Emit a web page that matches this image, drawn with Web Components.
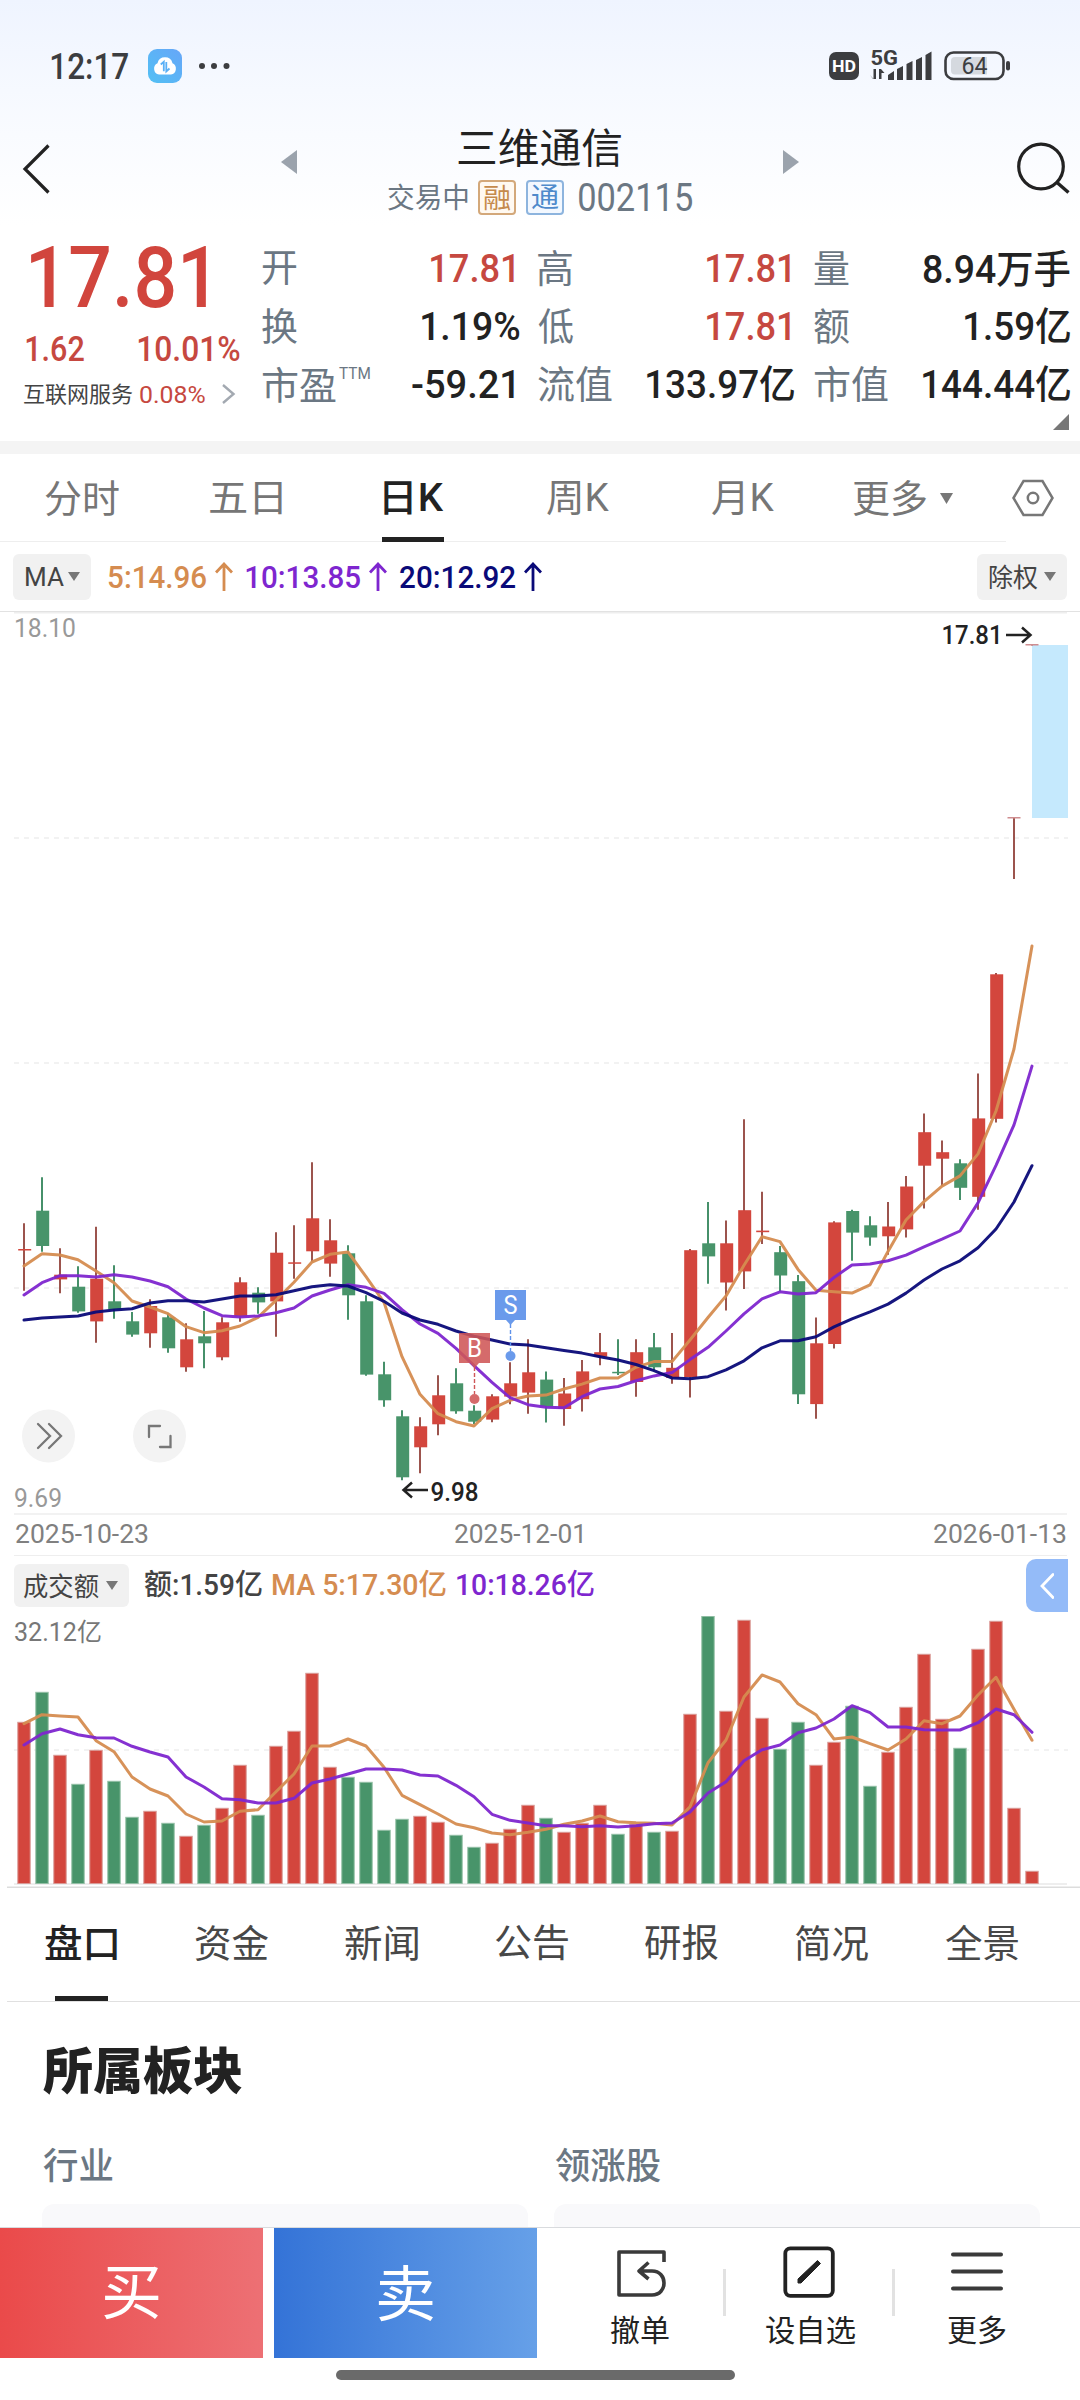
<!DOCTYPE html>
<html lang="zh-CN">
<head>
<meta charset="utf-8">
<title>三维通信 002115</title>
<style>
html,body{margin:0;padding:0}
body{width:1080px;height:2400px;overflow:hidden;background:#fff;font-family:Roboto,"Noto Sans CJK SC",sans-serif;color:#222}
</style>
</head>
<body>
<stock-app></stock-app>
<script>
const ctx = document.createElement('canvas').getContext('2d');

// <fit-text w="..">: a label whose box is exactly the ink of its text, condensed to the width w
class FitText extends HTMLElement {
  constructor() {
    super();
    this.attachShadow({ mode: 'open' }).innerHTML =
      '<style>:host{display:block;flex:none;white-space:nowrap}span{display:block;width:max-content;transform-origin:0 0}</style><span><slot></slot></span>';
  }
  connectedCallback() {
    const cs = getComputedStyle(this), size = parseFloat(cs.fontSize);
    ctx.font = `${cs.fontWeight} ${cs.fontSize} ${cs.fontFamily}`;
    const m = ctx.measureText(this.textContent);
    const ink = m.actualBoundingBoxRight + m.actualBoundingBoxLeft;
    const w = +this.getAttribute('w') || ink, k = w / ink;
    const base = (size - m.fontBoundingBoxAscent - m.fontBoundingBoxDescent) / 2 + m.fontBoundingBoxAscent;
    const h = m.actualBoundingBoxAscent + m.actualBoundingBoxDescent;
    this.style.width = w + 'px';
    this.style.height = h + 'px';
    this.style.lineHeight = size + 'px';
    this.shadowRoot.querySelector('span').style.transform =
      `translate(${m.actualBoundingBoxLeft * k}px,${m.actualBoundingBoxAscent - base}px) scaleX(${k})`;
  }
}
customElements.define('fit-text', FitText);

function define(name, css, html) {
  customElements.define(name, class extends HTMLElement {
    constructor() {
      super();
      const t = document.createElement('template');
      t.innerHTML = `<style>:host{display:block}*{box-sizing:border-box}svg{display:block;flex:none}.row{display:flex;align-items:center}${css}</style>${typeof html === 'function' ? html() : html}`;
      this.attachShadow({ mode: 'open' }).append(t.content.cloneNode(true));
    }
  });
}
const T = (text, w, ml = 0, style = '') => `<fit-text w="${w}" style="margin-left:${ml}px;${style}">${text}</fit-text>`;
const down = (w, h, ml, c = '#777') => `<svg style="margin-left:${ml}px" width="${w}" height="${h}" viewBox="0 0 12 9" preserveAspectRatio="none"><path d="M0 0h12L6 9z" fill="${c}"/></svg>`;

define('status-bar', ':host{height:132px;display:flex;align-items:center}.sp{flex:1}', `
${T('12:17', 77, 51, 'font-size:36px;font-weight:500;color:#3c3d40')}
<svg width="34" height="34" style="margin-left:20px" viewBox="0 0 34 34"><defs><linearGradient id="c" x1="0" y1="1" x2="1" y2="0"><stop offset="0" stop-color="#52c0f4"/><stop offset="1" stop-color="#66a6f8"/></linearGradient></defs><rect width="34" height="34" rx="9" fill="url(#c)"/><path d="M11 25.500a6 6 0 0 1-1.500-11.300 7.700 7.700 0 0 1 15 0 6 6 0 0 1-1.500 11.300z" fill="#fff"/><path d="M12.800 15.500l3-2.800v9.500M18.300 13v9.500l3.200-3" fill="none" stroke="#5ab0f6" stroke-width="1.800"/></svg>
<svg width="32" height="8" style="margin-left:17px"><g fill="#3c3d40"><circle cx="3" cy="4" r="3"/><circle cx="15" cy="4" r="3"/><circle cx="27.500" cy="4" r="3"/></g></svg>
<span class="sp"></span>
<svg width="192" height="40" viewBox="824 46 192 40" style="margin-right:64px">
<rect x="829" y="52" width="30" height="28" rx="7" fill="#3c3d40"/>
<text x="832" y="71.500" font-size="17" font-weight="700" fill="#fff" textLength="24" lengthAdjust="spacingAndGlyphs">HD</text>
<text x="870.500" y="64.500" font-size="21" font-weight="700" fill="#3c3d40" textLength="27.500" lengthAdjust="spacingAndGlyphs">5G</text>
<g fill="#3c3d40"><path d="M870 75l3.500 4V69h2.500v10h-3zM879 79V69h2l3.500 4h-3v6z"/>
<path d="M888 75l6-4v9h-6zM897 69l6-3v14h-6zM906.500 64l6-3v19h-6zM916 60l6-3v23h-6zM925.500 55l6-3.500V80h-6z"/></g>
<rect x="945.500" y="52.500" width="58" height="26.500" rx="8" fill="none" stroke="#3c3d40" stroke-width="2.600"/>
<path d="M955 57h32v17.500h-32a4 4 0 0 1-4-4v-9.500a4 4 0 0 1 4-4z" fill="#d5d9df"/>
<rect x="1006" y="61" width="4" height="9.500" rx="2" fill="#3c3d40"/>
<text x="961.500" y="74" font-size="23" font-weight="400" fill="#3c3d40" textLength="26" lengthAdjust="spacingAndGlyphs">64</text>
</svg>`);

define('title-bar', `:host{height:92px;display:flex;align-items:flex-start;margin-top:0}
.mid{width:305px;margin-left:91px;margin-top:-20px}
.a{height:70px;justify-content:center}.b{height:30px;color:#6b7783}
.badge{display:flex;width:38px;height:35px;align-items:center;justify-content:center;border:2px solid #d3a87a;border-radius:4px;margin-left:9px;flex:none}`, `
<svg width="64" height="80" viewBox="0 130 64 80" style="margin-top:-2px"><path d="M48.500 145.500L25 169l23.500 23.500" fill="none" stroke="#222" stroke-width="3.200"/></svg>
<svg width="16" height="24" viewBox="0 0 16 24" style="margin:18px 0 0 217px"><path d="M16 0v24L0 12z" fill="#9ba3ad"/></svg>
<div class="mid"><div class="row a">${T('三维通信', 163, -2, 'font-size:41px')}</div>
<div class="row b">${T('交易中', 80, 0, 'font-size:28px')}<span class="badge" style="color:#c58a4c;background:#fff9f1;margin-left:10px">${T('融', 27, 0, 'font-size:27px')}</span><span class="badge" style="color:#4f8acb;border-color:#8db4de;background:#f3f8ff;margin-left:10px">${T('通', 27, 0, 'font-size:27px')}</span>${T('002115', 113, 15, 'font-size:38px')}</div></div>
<svg width="16" height="24" viewBox="0 0 16 24" style="margin:18px 0 0 90px"><path d="M0 0v24l16-12z" fill="#9ba3ad"/></svg>
<svg width="70" height="64" viewBox="1010 136 70 64" style="margin:4px 0 0 211px"><circle cx="1041" cy="166.500" r="22.300" fill="none" stroke="#222" stroke-width="3.200"/><path d="M1057 182.500l11.500 10" stroke="#222" stroke-width="3.400"/></svg>`);

const cell = (label, lw, val, vw, c, mr, extra = '') => `<div class="row cell"><div class="row l">${T(label, lw)}${extra}</div><div class="v" style="color:${c};margin-right:${mr}px">${T(val, vw)}</div></div>`;
const R = '#c64840', K = '#222';
define('quote-panel', `:host{display:flex;height:217px;border-bottom:0}
.left{width:262px;color:#c64840}.big{height:104px;color:#d1453d}.s{height:40px}.i{height:52px}
.right{flex:1;padding-top:15px}.grid{display:grid;grid-template-columns:276px 276px 1fr;grid-auto-rows:58px}
.cell{justify-content:space-between}.l{font-size:38px;color:#6b7783}.v{font-size:39px;font-weight:500}`, `
<div class="left"><div class="row big">${T('17.81', 175, 31, 'font-size:85px;font-weight:500')}</div>
<div class="row s">${T('1.62', 58, 26, 'font-size:35px;font-weight:500')}${T('10.01%', 102, 54, 'font-size:35px;font-weight:500')}</div>
<div class="row i">${T('互联网服务', 109, 24, 'font-size:22px;color:#444')}${T('0.08%', 65, 7, 'font-size:24px')}<svg width="14" height="20" viewBox="0 0 14 20" style="margin-left:17px"><path d="M1 1l10.500 9L1 19" fill="none" stroke="#a3a9b1" stroke-width="2.400"/></svg></div></div>
<div class="right"><div class="grid">
${cell('开', 35, '17.81', 83, R, 24)}${cell('高', 34, '17.81', 83, R, 24)}${cell('量', 35, '8.94万手', 147, K, 10)}
${cell('换', 35, '1.19%', 97, K, 19)}${cell('低', 35, '17.81', 83, R, 24)}${cell('额', 35, '1.59亿', 105, K, 10)}
${cell('市盈', 74, '-59.21', 102, K, 24, T('TTM', 31, 3, 'font-size:17px;margin-top:-23px'))}${cell('流值', 74, '133.97亿', 147, K, 20)}${cell('市值', 74, '144.44亿', 147, K, 10)}
</div><svg width="16" height="16" viewBox="0 0 16 16" style="margin:1px 11px 0 auto"><path d="M16 0v16H0z" fill="#777"/></svg></div>`);

define('period-tabs', `:host{display:flex;align-items:center;height:88px;border-top:0;font-size:38px;color:#767676;background:linear-gradient(#eee,#eee) 0 100%/1006px 1.5px no-repeat}
.on{width:62px;height:88px;border-bottom:5px solid #222;padding-top:4px;display:flex;align-items:center;font-weight:500;color:#222;margin-left:100px}`, `
${T('分时', 74, 45)}${T('五日', 72, 91)}<div class="on">${T('日K', 60, 2)}</div>${T('周K', 62, 103)}${T('月K', 62, 103)}${T('更多', 73, 79)}${down(13, 11, 14)}
<svg width="44" height="40" viewBox="1010.500 478 44 40" style="margin-left:57.500px"><path d="M1013 498l10-17h19l10 17-10 17h-19z" fill="none" stroke="#777" stroke-width="2.500"/><circle cx="1032.500" cy="498" r="5.200" fill="none" stroke="#777" stroke-width="2.500"/></svg>`);

const up = (c, ml = 9) => `<svg width="18" height="29" viewBox="0 0 18 29" style="margin-left:${ml}px"><path d="M9 29V3M1 10.500L9 2l8 8.500" fill="none" stroke="${c}" stroke-width="2.800"/></svg>`;
const chip = 'background:#f1f1f1;border-radius:6px;display:flex;align-items:center;color:#444;';
define('ma-legend', ':host{display:flex;align-items:center;box-sizing:border-box;height:70px;font-size:32px;font-weight:500;border-bottom:1px solid #e2e2e2}', `
<div style="${chip}width:78px;height:46px;margin-left:13px;font-weight:400">${T('MA', 38, 13, 'font-size:26px')}${down(12, 9, 4)}</div>
${T('5:14.96', 98, 17, 'color:#d58c50')}${up('#d58c50')}${T('10:13.85', 114, 13, 'color:#7e26cf')}${up('#7e26cf')}${T('20:12.92', 115, 13, 'color:#0a0a78')}${up('#0a0a78')}
<div style="${chip}width:90px;height:46px;margin-left:435px;font-weight:400">${T('除权', 48, 13, 'font-size:26px')}${down(12, 9, 6)}</div>`);

// Each session: colour (r up / g down), high, body top, body bottom, low, all as y on the price canvas
const A = (c, ...v) => [c, ...v.map(y => 1100 + y / 3)];
const B = (c, ...v) => [c, ...v.map(y => 920 + y * .40816)];
const candles = [
A('r',370,447,450,572),A('g',232,332,438,455),A('r',445,524,538,580),A('g',499,560,634,638),A('r',380,536,664,728),A('g',496,604,628,656),A('g',636,664,704,710),A('r',598,618,700,743),A('g',640,652,745,758),A('r',670,718,802,815),A('g',633,709,730,805),A('r',652,667,772,781),A('r',532,547,650,665),A('g',562,578,607,641),A('r',397,458,604,710),A('r',376,487,491,536),A('r',187,355,454,485),A('r',358,421,491,530),A('g',436,460,586,659),A('g',586,604,824,827),A('g',785,823,901,920),A('g',931,949,1132,1141),A('r',952,979,1042,1120),A('r',826,886,973,1006),A('g',805,850,934,941),A('g',916,932,965,972),A('r',883,889,959,967),A('r',787,850,890,913),A('r',718,817,878,941),
B('g',1106,1126,1192,1231),B('r',1122,1160,1198,1239),B('r',1078,1106,1174,1204),B('r',1012,1059,1070,1091),B('g',1027,1107,1110,1115),B('r',1027,1059,1132,1168),B('g',1012,1047,1096,1104),B('r',1012,1097,1122,1136),B('r',806,809,1120,1170),B('g',691,792,824,891),B('r',736,792,888,957),B('r',488,711,861,904),B('r',666,761,765,794),B('g',799,814,871,910),B('g',870,885,1162,1186),B('r',974,1037,1186,1222),B('r',738,741,1039,1050),B('g',710,713,766,835),B('g',726,748,778,798),B('r',691,751,775,820),B('r',627,653,758,778),B('r',474,520,602,707),B('r',540,569,585,652),B('g',586,596,656,686),B('r',376,486,678,710),B('r',130,133,487,496),
['r',817,817,818.500,879],['r',644,644,645.500,645.500]];
const mA = (a, b) => [...a.map(y => 1100 + y / 3), ...b.map(y => 920 + y * .40816)];
const ma5 = mA([498,461,465,479,513,548,603,621,641,680,698,692,678,652,601,547,486,463,456,530,607,770,883,941,965,978,926,901,888],[1164,1149,1137,1122,1122,1096,1082,1082,1029,974,921,846,776,788,856,907,911,914,894,812,735,690,652,627,573,468,316,64]);
const ma10 = mA([585,548,527,527,531,524,531,543,560,597,624,647,651,648,638,624,588,570,554,562,580,629,672,700,745,797,847,893,914],[1194,1195,1168,1149,1143,1129,1117,1109,1077,1047,1007,965,928,911,916,913,876,845,843,835,821,801,782,762,693,601,502,358]);
const ma20 = mA([660,654,651,648,636,630,626,609,602,602,606,597,588,588,584,572,560,554,558,578,604,639,660,673,693,709,720,732,735],[1048,1055,1061,1070,1078,1089,1104,1122,1124,1119,1102,1080,1048,1031,1031,1021,997,977,960,941,914,882,855,835,803,757,691,602]);
const X = i => 24 + 18 * i;
const line = (ys, c, w = 3) => `<polyline points="${ys.map((y, i) => X(i) + ',' + y.toFixed(1)).join(' ')}" fill="none" stroke="${c}" stroke-width="${w}" stroke-linejoin="round" stroke-linecap="round" opacity=".95"/>`;
const hl = (y, c = '#eee', w = 1.6, x1 = 14, x2 = 1067) => `<path d="M${x1} ${y}H${x2}" stroke="${c}" stroke-width="${w}"/>`;
const dash = y => `<path d="M14 ${y}H1068" stroke="#eee" stroke-width="1.6" stroke-dasharray="5 5"/>`;
const svgT = (s, x, y, w, size, c, wt = 400) => `<text x="${x}" y="${y}" font-size="${size}" font-weight="${wt}" fill="${c}" textLength="${w}" lengthAdjust="spacingAndGlyphs">${s}</text>`;
const RED = '#d3463d', GREEN = '#48946a';

define('price-chart', ':host{height:943px}', () => `<svg width="1080" height="943" viewBox="0 612 1080 943">
${[838, 1063, 1288].map(dash).join('')}${hl(612.8, '#eee')}${hl(1514)}
<rect x="1032" y="645" width="36" height="173" fill="#c5e9fd"/>
${candles.map(([c, h, t, b, l], i) => `<path d="M${X(i)} ${h.toFixed(1)}V${l.toFixed(1)}" stroke="${c === 'r' ? '#9c544d' : '#46906a'}" stroke-width="2"/><rect x="${X(i) - (i > 54 ? 6.500 : 5.800)}" y="${t.toFixed(1)}" width="13" height="${Math.max(1.500, b - t).toFixed(1)}" fill="${i > 54 ? '#cf8d90' : c === 'r' ? RED : GREEN}"/>`).join('')}
${line(ma5, '#d58c50')}${line(ma10, '#7e26cf')}${line(ma20, '#0a0a78')}
<g fill="#5f92ea" fill-opacity=".93"><path d="M495 1290h31v30h-11l-4.500 5-4.500-5h-11z"/><circle cx="510.500" cy="1356" r="5"/></g>
<path d="M510.500 1324v27" stroke="#5f92ea" stroke-width="1.400" stroke-dasharray="4 2"/>
<g fill="#cf5657" fill-opacity=".88"><path d="M459 1333h31v30h-11l-4.500 5-4.500-5h-11z"/><circle cx="474.500" cy="1399" r="5"/></g>
<path d="M474.500 1367v27" stroke="#cf5657" stroke-width="1.400" stroke-dasharray="4 2"/>
${svgT('S', 503.500, 1314, 14, 25, '#fff', 400)}${svgT('B', 467, 1357, 15, 25, '#fff', 400)}
<g fill="#f3f3f3"><circle cx="48.500" cy="1436" r="26.500"/><circle cx="159.500" cy="1436" r="26.500"/></g>
<g fill="none" stroke="#777" stroke-width="2.300" stroke-linecap="round"><path d="M38 1424l12 12-12 12M49 1424l12 12-12 12M149 1437v-11h11M160 1447h10.500v-11"/></g>
${svgT('18.10', 14, 637, 62, 26, '#999')}${svgT('9.69', 14, 1507, 48, 26, '#999')}
${svgT('17.81', 941.500, 644, 61, 26, '#222', 500)}<path d="M1006 635h24M1022 627.500l8.500 7.500-8.500 7.500" fill="none" stroke="#222" stroke-width="2.500"/>
${svgT('9.98', 430.500, 1501, 48, 26, '#222', 500)}<path d="M428 1490h-24M412 1482.500l-8.500 7.500 8.500 7.500" fill="none" stroke="#222" stroke-width="2.500"/>
${svgT('2025-10-23', 15, 1543, 134, 26, '#808080')}${svgT('2025-12-01', 454, 1543, 133, 26, '#808080')}${svgT('2026-01-13', 933, 1543, 134, 26, '#808080')}
</svg>`);

const vol = 'r547 g457 r646 g733 r631 g724 g832 r814 g850 r889 g856 r805 r676 g826 r619 r574 r400 r682 g712 g727 g871 g838 r829 r847 g886 g922 r910 r868 r796 g835 r877 r850 r796 g883 r853 g877 r874 r523 g229 r514 r241 r535 g628 g547 r676 r607 g499 g739 r637 r502 r343 r538 g625 r328 r244 r805 r994'.split(' ');
const vy = a => a.map(y => 1540 + y / 3);
const v5 = vy([551,524,528,531,602,635,711,747,768,822,846,843,814,809,755,702,618,618,597,618,682,766,794,822,852,863,879,884,877,868,853,843,828,845,848,850,855,800,668,600,471,405,426,491,524,597,591,611,630,597,542,551,528,465,412,508,601]);
const v10 = vy([615,581,567,584,593,594,619,636,651,711,741,776,779,789,789,775,729,717,702,687,687,690,705,708,736,770,823,841,849,857,857,860,857,861,857,851,849,816,759,725,662,629,615,578,564,537,497,518,561,561,569,570,570,548,507,524,577]);

define('volume-chart', `:host{height:333px}.head{height:61px;font-size:29px;font-weight:500;background:linear-gradient(#eee,#eee) 14px 0/1053px 1px no-repeat}
.head>fit-text{margin-top:-4px}
.fold{width:42px;height:53px;background:#94bbf8;border-radius:10px 0 0 10px;margin-left:432px;display:flex;align-items:center;justify-content:center}`, () => `
<div class="row head"><div style="${chip}width:115px;height:43px;margin-left:14px;font-weight:400">${T('成交额', 76, 9, 'font-size:26px')}${down(12, 9, 7)}</div>
${T('额:1.59亿', 118, 15, 'color:#444')}${T('MA 5:17.30亿', 173, 11, 'color:#d58c50')}${T('10:18.26亿', 137, 11, 'color:#7e26cf')}
<div class="fold"><svg width="14" height="26" viewBox="0 0 14 26"><path d="M13 1.500L2 13l11 11.500" fill="none" stroke="#fff" stroke-width="2.800" stroke-linecap="round"/></svg></div></div>
<svg width="1080" height="272" viewBox="0 1616 1080 272">
${dash(1750)}${hl(1884, '#eee', 2)}
${vol.map((v, i) => { const y = 1540 + v.slice(1) / 3; return `<rect x="${X(i) - 6.200}" y="${y.toFixed(1)}" width="12.400" height="${(1883.500 - y).toFixed(1)}" fill="${v[0] === 'r' ? RED : GREEN}" stroke="${v[0] === 'r' ? '#d99a96' : '#93bfa5'}" stroke-width="1"/>`; }).join('')}
${line(v5, '#d58c50')}${line(v10, '#7e26cf')}
${svgT('32.12亿', 14, 1641, 88, 25.500, '#777')}
${hl(1887.300, '#ddd', 1.400, 7, 1080)}</svg>`);

define('info-tabs', `:host{display:flex;align-items:center;height:114px;font-size:38px;color:#484848;background:linear-gradient(#e0e0e0,#e0e0e0) 7px 100%/1073px 1.500px no-repeat}
.on{height:114px;display:flex;flex-direction:column;align-items:center;justify-content:space-between;margin-left:45px;color:#222;font-weight:500;padding-top:36px}
.on i{width:53px;height:5px;background:#222;margin-bottom:1px}`, `
<div class="on">${T('盘口', 72)}<i></i></div>${['资金', '新闻', '公告', '研报', '简况', '全景'].map((t, i) => T(t, 73, i ? 77 : 78, 'margin-top:-5px')).join('')}`);

define('sector-panel', `h2{margin:0;height:137px;font-size:50px;font-weight:900;color:#222;display:flex;align-items:center}
.r{display:grid;grid-template-columns:486px 486px;gap:26px;padding-left:42px}.lab{height:52px;display:flex;align-items:center;font-size:36px;font-weight:500;color:#6b7783}
.card{height:23px;background:#f9f9fb;border-radius:12px 12px 0 0;margin-top:13px}`, `
<h2>${T('所属板块', 199, 43, 'margin-top:-2px')}</h2>
<div class="r"><div><div class="lab">${T('行业', 70, 1)}</div><div class="card"></div></div><div><div class="lab">${T('领涨股', 105, 1)}</div><div class="card"></div></div></div>`);

define('trade-bar', `:host{border-top:1px solid #d9dbde;height:173px;background:#fff}
.bar{display:flex;height:130px}.b{width:263px;display:flex;align-items:center;justify-content:center;color:#fff;font-size:60px}
.buy{background:linear-gradient(90deg,#ea4a4a,#ed7074)}.sell{background:linear-gradient(90deg,#3473d7,#66a0e8);margin-left:11px}
.it{display:flex;flex-direction:column;align-items:center;font-size:30px;color:#222}
.sep{width:3px;height:47px;background:#e2e2e2;margin-top:41px}
.home{width:399px;height:10px;border-radius:5px;background:#6a6a6a;margin:12px 0 0 336px}`, `
<div class="bar"><div class="b buy">${T('买', 55, 0)}</div><div class="b sell">${T('卖', 55, 0)}</div>
<div class="it" style="width:186px">
<svg width="54" height="54" viewBox="0 0 54 54" style="margin:17px 0 16px 24px"><path d="M49 17V7H4v43h33c16 0 16-24 0-24H26M33.500 17.500L24 26l9.500 8" fill="none" stroke="#3a3a3a" stroke-width="3.600" stroke-linejoin="round"/></svg>${T('撤单', 58, 19)}</div>
<div class="sep"></div>
<div class="it" style="width:166px"><svg width="54" height="54" viewBox="0 0 54 54" style="margin:17px 0 16px 0"><rect x="3.300" y="3.300" width="47.500" height="47.500" rx="5" fill="none" stroke="#222" stroke-width="3.800"/><path d="M16 38v-4l19.500-18.500 3 3L19 38z" fill="#222" stroke="#222" stroke-width="1"/></svg>${T('设自选', 89, 2)}</div>
<div class="sep"></div>
<div class="it" style="width:164px"><svg width="54" height="54" viewBox="0 0 54 54" style="margin:17px 0 16px 0"><path d="M3 9.500h48M3 26.500h48M3 43.500h48" stroke="#3a3a3a" stroke-width="4" stroke-linecap="round"/></svg>${T('更多', 58, 0)}</div></div>
<div class="home"></div>`);

define('stock-app', `:host{width:1080px;height:2400px;overflow:hidden;background:linear-gradient(#eff4ff,#f6f9ff 90px,#fff 225px)}
.band{height:13px;background:#f4f4f4}`, `
<status-bar></status-bar><title-bar></title-bar><quote-panel></quote-panel><div class="band"></div><period-tabs></period-tabs><ma-legend></ma-legend><price-chart></price-chart><volume-chart></volume-chart><info-tabs></info-tabs><sector-panel></sector-panel><trade-bar></trade-bar>`);
</script>
</body>
</html>
